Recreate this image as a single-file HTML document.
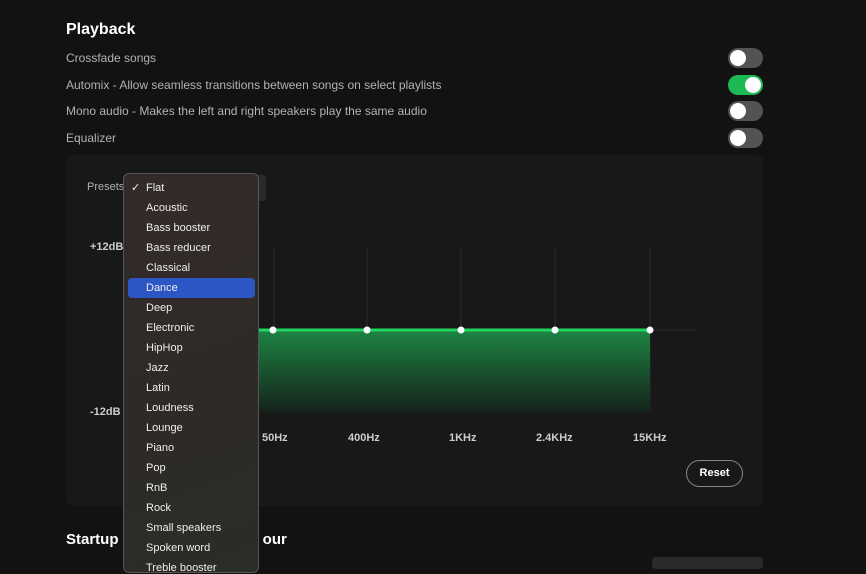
<!DOCTYPE html><html><head><style>
*{margin:0;padding:0;box-sizing:border-box}
body{width:866px;height:566px;overflow:hidden;background:#121212;font-family:"Liberation Sans",sans-serif;color:#fff;position:relative}
.a{position:absolute}
.h{font-size:16px;font-weight:bold}
.r{font-size:12px;color:#b3b3b3}
.t{position:absolute;left:728px;width:35px;height:20px;border-radius:10px;background:#535353}
.t::after{content:"";position:absolute;left:2px;top:2px;width:16px;height:16px;border-radius:50%;background:#fff}
.t.on{background:#1db954}.t.on::after{left:17px}
.lb{font-size:11px;color:#ccc;font-weight:bold}
.dd{left:123px;top:173px;width:136px;height:400px;background:linear-gradient(160deg,#332b2a,#2e2a27 60%,#2a2d28);border:1px solid #555;border-radius:6px}
.it{position:absolute;left:22px;font-size:11px;color:#eee}
</style></head><body>
<div class="a h" style="left:66px;top:21px">Playback</div>
<div class="a r" style="left:66px;top:51px">Crossfade songs</div>
<div class="a r" style="left:66px;top:78px">Automix - Allow seamless transitions between songs on select playlists</div>
<div class="a r" style="left:66px;top:104px">Mono audio - Makes the left and right speakers play the same audio</div>
<div class="a r" style="left:66px;top:131px">Equalizer</div>
<div class="t" style="top:48px"></div><div class="t on" style="top:75px"></div><div class="t" style="top:101px"></div><div class="t" style="top:128px"></div>
<div class="a" style="left:66px;top:155px;width:697px;height:351px;background:#181818;border-radius:6px"></div>
<div class="a r" style="left:87px;top:181px;font-size:11px">Presets</div>
<div class="a" style="left:250px;top:175px;width:16px;height:26px;background:#2a2a2a;border-radius:3px"></div>
<div class="a lb" style="left:90px;top:241px">+12dB</div>
<div class="a lb" style="left:90px;top:406px">-12dB</div>
<svg class="a" style="left:0;top:0" width="866" height="566">
<defs><linearGradient id="g" x1="0" y1="0" x2="0" y2="1"><stop offset="0" stop-color="#1d8443"/><stop offset="1" stop-color="#15221a"/></linearGradient></defs>
<g stroke="#2c2c2c" stroke-width="1"><line x1="274" y1="248" x2="274" y2="412"/><line x1="367" y1="248" x2="367" y2="412"/><line x1="461" y1="248" x2="461" y2="412"/><line x1="555" y1="248" x2="555" y2="412"/><line x1="650" y1="248" x2="650" y2="412"/><line x1="650" y1="330" x2="696" y2="330"/></g>
<rect x="259" y="330" width="391" height="82" fill="url(#g)"/>
<line x1="259" y1="330" x2="650" y2="330" stroke="#1ed760" stroke-width="3"/>
<g fill="#fff"><circle cx="273" cy="330" r="3.5"/><circle cx="367" cy="330" r="3.5"/><circle cx="461" cy="330" r="3.5"/><circle cx="555" cy="330" r="3.5"/><circle cx="650" cy="330" r="3.5"/></g>
</svg>
<div class="a lb" style="left:262px;top:432px">50Hz</div>
<div class="a lb" style="left:348px;top:432px">400Hz</div>
<div class="a lb" style="left:449px;top:432px">1KHz</div>
<div class="a lb" style="left:536px;top:432px">2.4KHz</div>
<div class="a lb" style="left:633px;top:432px">15KHz</div>
<div class="a" style="left:686px;top:460px;width:57px;height:27px;border:1px solid #888;border-radius:14px;font-size:11px;font-weight:bold;text-align:center;line-height:25px">Reset</div>
<div class="a h" style="left:66px;top:531px;font-size:15px">Startup <span style="margin-left:140px">our</span></div>
<div class="a" style="left:652px;top:557px;width:111px;height:12px;background:#2a2a2a;border-radius:4px"></div>
<div class="a dd">
<div class="it" style="left:7px;top:7px">✓</div>
<div class="a" style="left:4px;top:104px;width:127px;height:20px;background:#2c56c4;border-radius:4px"></div>
<div class="it" style="top:8px">Flat</div><div class="it" style="top:28px">Acoustic</div><div class="it" style="top:48px">Bass booster</div><div class="it" style="top:68px">Bass reducer</div><div class="it" style="top:88px">Classical</div><div class="it" style="top:108px">Dance</div><div class="it" style="top:128px">Deep</div><div class="it" style="top:148px">Electronic</div><div class="it" style="top:168px">HipHop</div><div class="it" style="top:188px">Jazz</div><div class="it" style="top:208px">Latin</div><div class="it" style="top:228px">Loudness</div><div class="it" style="top:248px">Lounge</div><div class="it" style="top:268px">Piano</div><div class="it" style="top:288px">Pop</div><div class="it" style="top:308px">RnB</div><div class="it" style="top:328px">Rock</div><div class="it" style="top:348px">Small speakers</div><div class="it" style="top:368px">Spoken word</div><div class="it" style="top:388px">Treble booster</div>
</div>
</body></html>
